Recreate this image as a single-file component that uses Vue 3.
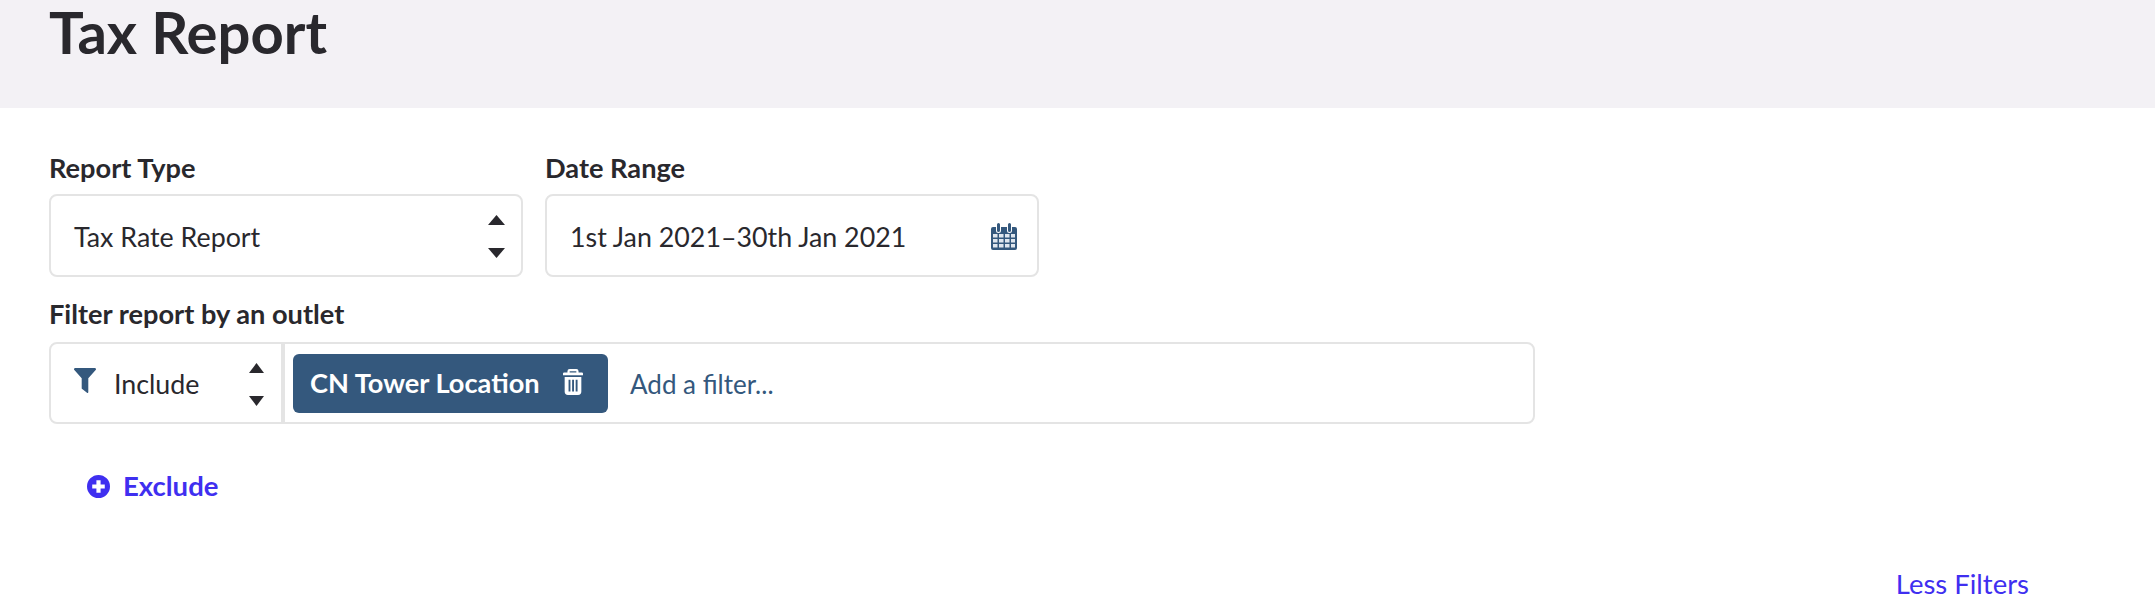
<script setup>
const arrows = 'M0 10 L8.500 0 L17 10 Z'
</script>

<template>
  <div class="page">
    <header class="head">
      <h1 class="head__title">Tax Report</h1>
    </header>

    <main class="body">
      <div class="row">
        <div class="field field--type">
          <label class="label">Report Type</label>
          <div class="box box--select box--type">
            <span class="value">Tax Rate Report</span>
            <span class="stepper">
              <svg width="17" height="10" viewBox="0 0 17 10"><path :d="arrows" /></svg>
              <svg class="stepper__down" width="17" height="10" viewBox="0 0 17 10"><path :d="arrows" /></svg>
            </span>
          </div>
        </div>

        <div class="field field--date">
          <label class="label">Date Range</label>
          <div class="box box--select">
            <span class="value">1st Jan 2021–30th Jan 2021</span>
            <svg class="calendar" width="26" height="27" viewBox="0 0 26 27">
              <path fill="#34587d" d="M2 4h3v3.500a2.500 2.500 0 0 0 5 0V4h6v3.500a2.500 2.500 0 0 0 5 0V4h3a2 2 0 0 1 2 2v19a2 2 0 0 1-2 2H2a2 2 0 0 1-2-2V6a2 2 0 0 1 2-2z" />
              <path fill="#34587d" d="M6 1.500a1.500 1.500 0 0 1 3 0v6a1.500 1.500 0 0 1-3 0zM17 1.500a1.500 1.500 0 0 1 3 0v6a1.500 1.500 0 0 1-3 0z" />
              <path fill="#dfe6ee" d="M2 11h4.500v3.500H2zM8 11h4.500v3.500H8zM14 11h4.500v3.500H14zM20 11h4v3.500h-4zM2 16h4.500v3.500H2zM8 16h4.500v3.500H8zM14 16h4.500v3.500H14zM20 16h4v3.500h-4zM2 21h4.500v3.500H2zM8 21h4.500v3.500H8zM14 21h4.500v3.500H14zM20 21h4v3.500h-4z" />
            </svg>
          </div>
        </div>
      </div>

      <label class="label label--filter">Filter report by an outlet</label>
      <div class="box filter">
        <div class="filter__mode">
          <svg class="funnel" width="22" height="25" viewBox="0 0 20 22" preserveAspectRatio="none">
            <path fill="#34587d" d="M1 0h18a1 1 0 0 1 .7 1.700L13 9v12.200a.8.800 0 0 1-1.200.600l-4-3a1 1 0 0 1-.8-1V9L.3 1.700A1 1 0 0 1 1 0z" />
          </svg>
          <span class="value">Include</span>
          <span class="stepper stepper--mode">
            <svg width="15" height="10" viewBox="0 0 17 10" preserveAspectRatio="none"><path :d="arrows" /></svg>
            <svg class="stepper__down" width="15" height="10" viewBox="0 0 17 10" preserveAspectRatio="none"><path :d="arrows" /></svg>
          </span>
        </div>
        <div class="filter__tags">
          <span class="chip">
            CN Tower Location
            <svg class="chip__trash" width="20" height="26" viewBox="0 0 18 23" preserveAspectRatio="none">
              <path fill="#fff" d="M6 0h6a2 2 0 0 1 2 2v1h3a1 1 0 0 1 1 1v1.500H0V4a1 1 0 0 1 1-1h3V2a2 2 0 0 1 2-2zm0 2v1h6V2z" />
              <path fill="#fff" fill-rule="evenodd" d="M1.500 7h15v13a3 3 0 0 1-3 3h-9a3 3 0 0 1-3-3zM5 9.500v10.500h1.700V9.500zm3.200 0v10.500h1.700V9.500zm3.200 0v10.500h1.700V9.500z" />
            </svg>
          </span>
          <span class="filter__add">Add a filter...</span>
        </div>
      </div>

      <div class="exclude">
        <svg width="23" height="23" viewBox="0 0 22 22">
          <path fill="#3f2ff0" fill-rule="evenodd" d="M11 0a11 11 0 1 1 0 22a11 11 0 0 1 0-22zM9 5v4H5v4h4v4h4v-4h4V9h-4V5z" />
        </svg>
        <span>Exclude</span>
      </div>

      <div class="foot">
        <a class="foot__less">Less Filters</a>
      </div>
    </main>
  </div>
</template>

<style>
html,
body {
  margin: 0;
  background: #fff;
}
</style>

<style scoped>
.page {
  width: 2155px;
  height: 609px;
  overflow: hidden;
  font-family: Lato, "Liberation Sans", sans-serif;
  color: #29282d;
}

.head {
  height: 108px;
  padding-left: 49px;
  background: #f3f1f5;
}

.head__title {
  margin: 0;
  font-size: 58px;
  font-weight: 700;
  line-height: 64px;
}

.body {
  padding: 44px 0 0 49px;
}

.row {
  display: flex;
  gap: 22px;
}

.field--type {
  width: 474px;
}

.field--date {
  width: 494px;
}

.label {
  display: block;
  height: 42px;
  font-size: 27.200px;
  font-weight: 700;
  line-height: 32px;
}

.label--filter {
  height: 44px;
  margin-top: 21px;
}

.box {
  box-sizing: border-box;
  border: 2px solid #e4e4e4;
  border-radius: 8px;
  background: #fff;
}

.box--select {
  display: flex;
  align-items: center;
  justify-content: space-between;
  height: 83px;
  padding: 2px 20px 0 23px;
}

.box--type {
  padding-right: 16px;
}

.value {
  font-size: 26.800px;
  line-height: 32px;
}

.stepper {
  display: flex;
  flex-direction: column;
  gap: 23px;
}

.stepper svg {
  display: block;
  fill: #29282d;
}

.stepper__down {
  transform: rotate(180deg);
}

.stepper--mode {
  margin-left: auto;
}

.filter {
  display: flex;
  width: 1486px;
  height: 82px;
}

.filter__mode {
  box-sizing: border-box;
  display: flex;
  align-items: center;
  width: 234px;
  padding: 2px 17px 0 23px;
  border-right: 4px solid #e4e4e4;
}

.funnel {
  flex-shrink: 0;
  margin: -8px 18px 0 0;
}

.filter__tags {
  display: flex;
  align-items: center;
  padding-left: 8px;
}

.chip {
  box-sizing: border-box;
  display: flex;
  flex-shrink: 0;
  align-items: center;
  justify-content: space-between;
  width: 315px;
  height: 59px;
  padding: 0 25px 2px 17px;
  border-radius: 6px;
  background: #34587d;
  color: #fff;
  font-size: 27.200px;
  font-weight: 700;
  white-space: nowrap;
}

.chip__trash {
  flex-shrink: 0;
}

.filter__add {
  margin-left: 22px;
  padding-top: 2px;
  color: #34587d;
  font-size: 26px;
}

.exclude {
  display: flex;
  align-items: center;
  gap: 13px;
  margin: 46px 0 0 38px;
  color: #3f2ff0;
  font-size: 27.500px;
  font-weight: 700;
  line-height: 32px;
}

.foot {
  display: flex;
  justify-content: flex-end;
  width: 1980px;
  margin-top: 66px;
}

.foot__less {
  color: #3f2ff0;
  font-size: 27.500px;
  line-height: 32px;
}
</style>
